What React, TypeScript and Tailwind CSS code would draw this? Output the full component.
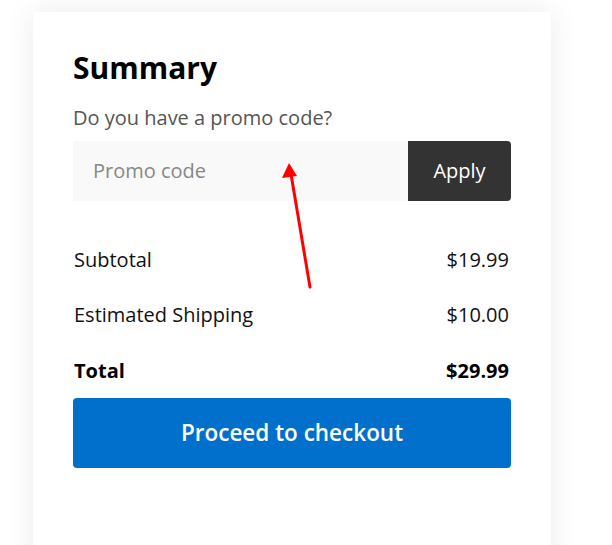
import React from 'react';

const rows = [
  { label: 'Subtotal', value: '$19.99' },
  { label: 'Estimated Shipping', value: '$10.00' },
];

export default function App() {
  return (
    <div className="relative h-[545px] w-[612px] overflow-hidden bg-white font-['Open_Sans',sans-serif]">
      <div className="ml-[33px] mt-[12px] h-[600px] w-[518px] bg-white px-[40px] pt-[36px] shadow-[0_0_30px_rgba(0,0,0,0.08)]">
        <h2 className="text-[30px] font-bold leading-[40px] text-black">Summary</h2>
        <p className="mt-[16px] text-[20px] leading-[28px] text-[#555]">Do you have a promo code?</p>
        <div className="mt-[9px] flex h-[60px]">
          <input
            placeholder="Promo code"
            className="min-w-0 flex-1 bg-[#f9f9f9] px-[20px] text-[20px] text-[#333] outline-none placeholder:text-[#888]"
          />
          <button className="w-[103px] rounded-r-[4px] bg-[#333] text-[20px] text-white">Apply</button>
        </div>
        <div className="mt-[45px] flex flex-col gap-[27px] pl-[1px] pr-[2px]">
          {rows.map((r) => (
            <div key={r.label} className="flex justify-between text-[20px] leading-[28px] text-[#111]">
              <span>{r.label}</span>
              <span>{r.value}</span>
            </div>
          ))}
          <div className="flex justify-between pt-[1px] text-[20px] font-bold leading-[28px] text-black">
            <span>Total</span>
            <span>$29.99</span>
          </div>
        </div>
        <button className="mt-[13px] h-[70px] w-full rounded-[4px] bg-[#0070cc] text-[22.5px] font-semibold text-white">
          Proceed to checkout
        </button>
      </div>
      <svg className="pointer-events-none absolute left-0 top-0" width="612" height="545">
        <line x1="310" y1="287" x2="291" y2="174" stroke="#f00" strokeWidth="3" strokeLinecap="round" />
        <polygon points="289,163 282,178 297,176" fill="#f00" />
      </svg>
    </div>
  );
}
